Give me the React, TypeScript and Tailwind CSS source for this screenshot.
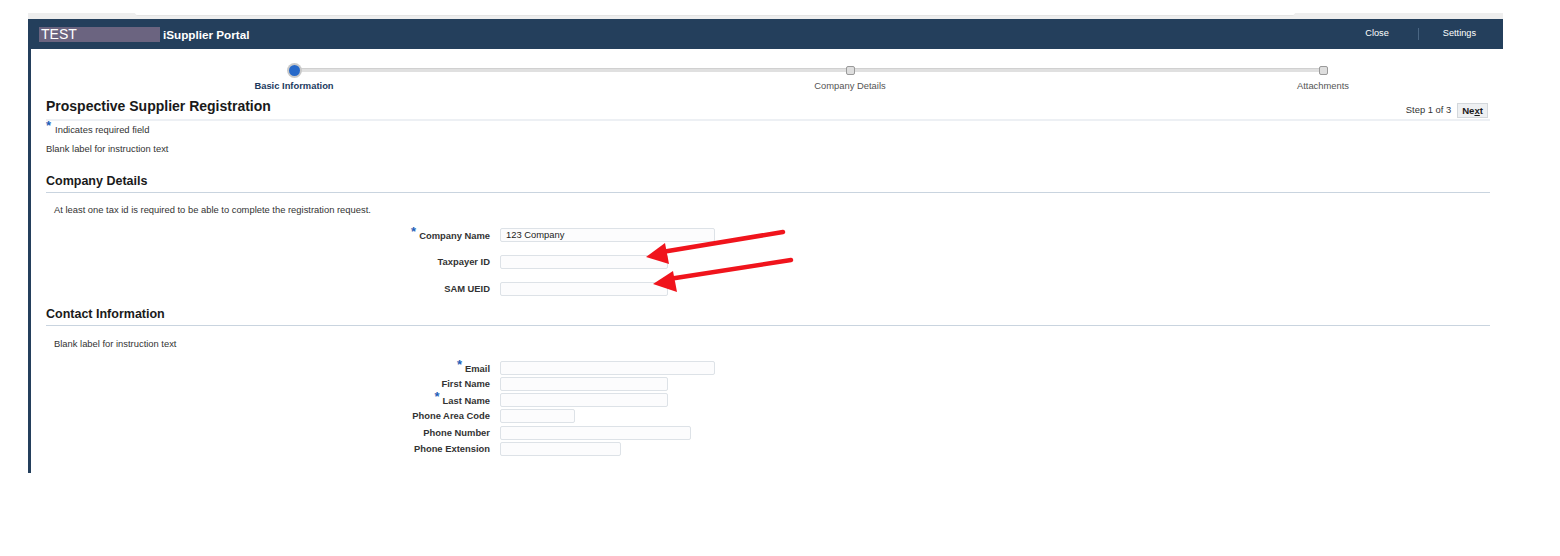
import React from "react";

const font = { fontFamily: '"Liberation Sans", Arial, sans-serif' };

function Req() {
  return <span className="text-[#1f5fb8] text-[13px] font-bold relative top-[-3px] mr-[3px]">*</span>;
}

function Row({ label, req, w, value, h = "h-[16px]", mt = "" }: { label: string; req?: boolean; w: string; value?: string; h?: string; mt?: string }) {
  return (
    <div className={`flex items-center ${h} ${mt}`}>
      <div className="w-[444px] text-right text-[9.4px] font-bold text-[#333] leading-[14px] pr-0">
        {req && <Req />}
        {label}
      </div>
      <div className="ml-[10px]">
        <div className={`${w} h-[14px] border border-[#dde2e7] bg-[#fcfcfd] rounded-[2px] text-[9.4px] leading-[12px] pl-[5px] text-[#222]`}>{value}</div>
      </div>
    </div>
  );
}

function Stop({ active, label }: { active?: boolean; label: string }) {
  return (
    <div className="w-[120px] flex flex-col items-center">
      <div className="h-[14px] flex items-center justify-center">
        {active ? (
          <div className="w-[15px] h-[15px] rounded-full bg-[#c9c9c9] flex items-center justify-center">
            <div className="w-[11px] h-[11px] rounded-full bg-[#2769c9]" />
          </div>
        ) : (
          <div className="w-[9px] h-[9px] rounded-[2px] bg-[#dedede] border border-[#9a9a9a]" />
        )}
      </div>
      <div className={`mt-[2px] text-[9.4px] leading-[14px] whitespace-nowrap ${active ? "text-[#1c3a5e] font-bold" : "text-[#555]"}`}>{label}</div>
    </div>
  );
}

export default function App() {
  return (
    <div style={font} className="relative w-[1560px] h-[556px] bg-white">
      {/* top strip */}
      <div className="ml-[28px] w-[1475px] h-[19px] pt-[13px]">
        <div className="h-[6px] bg-[#eeeeee] relative">
          <div className="ml-[107px] w-[1160px] h-[3px] bg-white rounded-b-[6px] border-b border-[#e4e4e4]" />
        </div>
      </div>
      {/* header */}
      <div className="ml-[28px] w-[1475px] h-[30px] bg-[#243f5c] flex items-center">
        <div className="ml-[11px] w-[121px] h-[15px] bg-[#6b6480] text-white text-[14px] leading-[15px] pl-[2px]">TEST</div>
        <div className="ml-[3px] text-white font-bold text-[11.7px] mt-[2px]">iSupplier Portal</div>
        <div className="ml-auto flex items-center text-white text-[9.2px] mr-[27px]">
          <span>Close</span>
          <span className="ml-[29px] mr-[24px] w-[1px] h-[12px] bg-[#4a6683]" />
          <span>Settings</span>
        </div>
      </div>
      {/* content */}
      <div className="ml-[28px] w-[1475px] h-[424px] border-l-[3px] border-[#243f5c]">
        {/* train */}
        <div className="relative pt-[14px] flex">
          <div className="absolute left-[263px] top-[19px] w-[1029px] h-[4px] bg-[#e0e0e0] border-t border-[#d0d0d0]" />
          <div className="relative ml-[203px] flex">
            <Stop active label="Basic Information" />
            <div className="w-[436px]" />
            <Stop label="Company Details" />
            <div className="w-[353px]" />
            <Stop label="Attachments" />
          </div>
        </div>
        <div className="pl-[15px] pr-[13px]">
          {/* title */}
          <div className="mt-[5px] flex items-end border-b-2 border-[#edf0f4] pb-[1px]">
            <div className="text-[14px] leading-[17px] font-bold text-[#1a1a1a] pb-[3px]">Prospective Supplier Registration</div>
            <div className="ml-auto flex items-center mr-[2px]">
              <span className="text-[9.4px] text-[#333] mr-[6px]">Step 1 of 3</span>
              <div className="h-[15px] px-[4px] bg-[#eef0f2] border border-[#d4d8dc] text-[9.6px] leading-[13px] font-bold text-[#1a1a1a]">
                Ne<span className="underline">x</span>t
              </div>
            </div>
          </div>
          <div className="mt-[1px] text-[9.4px] leading-[14px] text-[#333]">
            <span className="text-[#1f5fb8] text-[13px] font-bold relative top-[-3px] mr-[4px]">*</span>Indicates required field
          </div>
          <div className="mt-[5px] text-[9.4px] leading-[14px] text-[#333]">Blank label for instruction text</div>
          {/* Company details */}
          <div className="mt-[17px] text-[12.5px] leading-[16px] font-bold text-[#1a1a1a] pb-[3px] border-b border-[#c9d4df]">Company Details</div>
          <div className="mt-[10px] ml-[8px] text-[9.4px] leading-[14px] text-[#333]">At least one tax id is required to be able to complete the registration request.</div>
          <div className="mt-[10px]">
            <Row label="Company Name" req w="w-[215px]" value="123 Company" />
            <Row label="Taxpayer ID" w="w-[168px]" mt="mt-[11px]" />
            <Row label="SAM UEID" w="w-[168px]" mt="mt-[11px]" />
          </div>
          {/* Contact */}
          <div className="mt-[9px] text-[12.5px] leading-[16px] font-bold text-[#1a1a1a] pb-[3px] border-b border-[#c9d4df]">Contact Information</div>
          <div className="mt-[11px] ml-[8px] text-[9.4px] leading-[14px] text-[#333]">Blank label for instruction text</div>
          <div className="mt-[9px]">
            <Row label="Email" req w="w-[215px]" />
            <Row label="First Name" w="w-[168px]" />
            <Row label="Last Name" req w="w-[168px]" />
            <Row label="Phone Area Code" w="w-[75px]" />
            <Row label="Phone Number" w="w-[191px]" h="h-[17px]" />
            <Row label="Phone Extension" w="w-[121px]" />
          </div>
        </div>
      </div>
      {/* red arrows overlay */}
      <svg className="absolute left-0 top-0 pointer-events-none" width="1560" height="556">
        <line x1="783" y1="232" x2="662" y2="252" stroke="#f0141c" strokeWidth="4.5" strokeLinecap="round" />
        <polygon points="646,257 665,243 669,264" fill="#f0141c" />
        <line x1="791" y1="260" x2="669" y2="279" stroke="#f0141c" strokeWidth="4.5" strokeLinecap="round" />
        <polygon points="653,284 673,271 677,292" fill="#f0141c" />
      </svg>
    </div>
  );
}
